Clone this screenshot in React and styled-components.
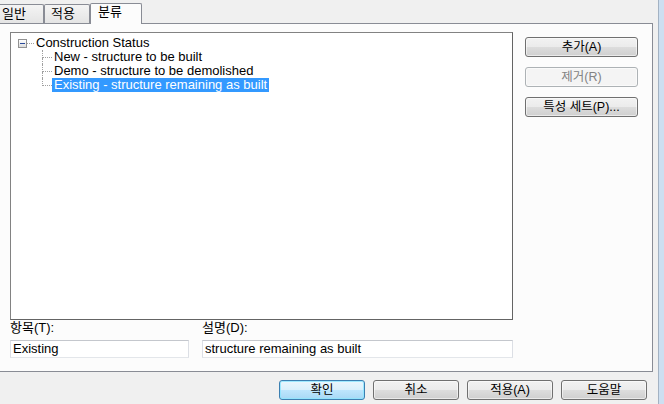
import styled, { createGlobalStyle } from "styled-components";

const GlobalStyle = createGlobalStyle`
  html, body {
    margin: 0;
    padding: 0;
    background: #f0f0f0;
  }
  body {
    font-family: "Liberation Sans", "Noto Sans CJK KR", sans-serif;
    font-size: 12.5px;
    color: #000;
    overflow: hidden;
  }
`;

const Screen = styled.div`
  display: flex;
  width: 664px;
  height: 404px;
  overflow: hidden;
  background: #f0f0f0;
`;

const Dialog = styled.div`
  flex: 1;
  min-width: 0;
  margin-left: -1px;
  display: flex;
  flex-direction: column;
`;

const WindowEdge = styled.div`
  width: 5px;
  border-left: 1px solid #a3b2c3;
  background: #cddff1;
`;

const TabStrip = styled.div`
  display: flex;
  align-items: flex-end;
  height: 23px;
  margin-left: -4px;
`;

const Tab = styled.div`
  position: relative;
  z-index: ${(p) => (p.$active ? 2 : 1)};
  box-sizing: border-box;
  width: ${(p) => p.$w}px;
  height: ${(p) => (p.$active ? 21 : 19)}px;
  margin-bottom: ${(p) => (p.$active ? -1 : 0)}px;
  padding: ${(p) => (p.$active ? "0 0 0 7px" : "1px 0 0 6px")};
  border: 1px solid #898c95;
  border-bottom: none;
  border-radius: 2px 2px 0 0;
  background: ${(p) =>
    p.$active ? "#fcfcfc" : "linear-gradient(#f4f4f4, #e4e4e4)"};
  font-size: 13px;
  line-height: 15px;
  white-space: nowrap;
`;

const Panel = styled.div`
  box-sizing: border-box;
  height: 349px;
  margin-right: 5px;
  padding: 8px 0 0 10px;
  border: 1px solid #898c95;
  background: #fcfcfc;
  display: flex;
  gap: 12px;
`;

const LeftColumn = styled.div`
  width: 503px;
  display: flex;
  flex-direction: column;
`;

const TreeBox = styled.div`
  box-sizing: border-box;
  height: 288px;
  padding: 3px 0 0 7px;
  border: 1px solid;
  border-color: #828282 #646464 #646464 #828282;
  background: #fff;
  font-size: 13px;
`;

const TreeRow = styled.div`
  display: flex;
  align-items: center;
  height: 14px;
  padding-left: ${(p) => p.$indent || 0}px;
`;

const Expander = styled.div`
  box-sizing: border-box;
  width: 9px;
  height: 9px;
  margin-top: 1px;
  border: 1px solid #929292;
  background: linear-gradient(#ffffff, #dcdcdc);
  display: flex;
  align-items: center;
  justify-content: center;

  &::after {
    content: "";
    width: 5px;
    height: 1px;
    background: #2a4a9b;
  }
`;

const RootStub = styled.div`
  width: 7px;
  height: 0;
  margin-top: 1px;
  border-top: 1px dotted #a0a0a0;
`;

const Connector = styled.div`
  width: 10px;
  height: 14px;
  display: flex;
  flex-direction: column;
`;

const ConnectorTop = styled.div`
  box-sizing: border-box;
  height: 8px;
  border-left: 1px dotted #a0a0a0;
  border-bottom: 1px dotted #a0a0a0;
`;

const ConnectorBottom = styled.div`
  height: 6px;
  border-left: 1px dotted ${(p) => (p.$last ? "transparent" : "#a0a0a0")};
`;

const NodeLabel = styled.span`
  padding: 0 2px;
  line-height: 14px;
  white-space: nowrap;
  background: ${(p) => (p.$selected ? "#3399ff" : "transparent")};
  color: ${(p) => (p.$selected ? "#fff" : "#000")};
`;

const FieldRow = styled.div`
  display: flex;
  gap: 13px;
`;

const Field = styled.div`
  width: ${(p) => p.$w}px;
  display: flex;
  flex-direction: column;
`;

const FieldLabel = styled.div`
  height: 14px;
  margin: 1px 0 5px;
  font-size: 13px;
  line-height: 14px;
`;

const TextBox = styled.div`
  box-sizing: border-box;
  height: 18px;
  padding: 0 2px;
  border: 1px solid;
  border-color: #c4c7cd #dcdfe5 #e3e6ea #dcdfe5;
  background: #fff;
  font-size: 13px;
  line-height: 16px;
  white-space: nowrap;
  overflow: hidden;
`;

const ButtonColumn = styled.div`
  padding-top: 5px;
  display: flex;
  flex-direction: column;
  gap: 10px;
`;

const Button = styled.button`
  box-sizing: border-box;
  width: ${(p) => p.$w}px;
  height: 20px;
  padding: 0;
  border: 1px solid
    ${(p) => (p.$focused ? "#3c7fb1" : p.disabled ? "#adb2b5" : "#707070")};
  border-radius: 3px;
  background: ${(p) =>
    p.$focused
      ? "linear-gradient(#eaf6fd 0%, #d9f0fc 50%, #bee6fd 50%, #a7d9f5 100%)"
      : p.disabled
      ? "#f4f4f4"
      : "linear-gradient(#f2f2f2 0%, #ebebeb 50%, #dddddd 50%, #cfcfcf 100%)"};
  box-shadow: inset 0 0 0 1px
    ${(p) => (p.$focused ? "rgba(140, 230, 255, 0.8)" : "rgba(255, 255, 255, 0.55)")};
  font: inherit;
  line-height: 18px;
  color: ${(p) => (p.disabled ? "#838383" : "#000")};
  text-align: center;
`;

const Footer = styled.div`
  display: flex;
  justify-content: flex-end;
  gap: 8px;
  padding: 8px 11px 0 0;
`;

const children = [
  "New - structure to be built",
  "Demo - structure to be demolished",
  "Existing - structure remaining as built",
];

const App = () => {
  const selected = 2;

  return (
    <Screen>
      <GlobalStyle />
      <Dialog>
        <TabStrip>
          <Tab $w={49}>일반</Tab>
          <Tab $w={46}>적용</Tab>
          <Tab $w={52} $active>
            분류
          </Tab>
        </TabStrip>

        <Panel>
          <LeftColumn>
            <TreeBox>
              <TreeRow>
                <Expander />
                <RootStub />
                <NodeLabel>Construction Status</NodeLabel>
              </TreeRow>
              {children.map((text, idx) => (
                <TreeRow key={text} $indent={24}>
                  <Connector>
                    <ConnectorTop />
                    <ConnectorBottom $last={idx === children.length - 1} />
                  </Connector>
                  <NodeLabel $selected={idx === selected}>{text}</NodeLabel>
                </TreeRow>
              ))}
            </TreeBox>

            <FieldRow>
              <Field $w={179}>
                <FieldLabel>항목(T):</FieldLabel>
                <TextBox>Existing</TextBox>
              </Field>
              <Field $w={311}>
                <FieldLabel>설명(D):</FieldLabel>
                <TextBox>structure remaining as built</TextBox>
              </Field>
            </FieldRow>
          </LeftColumn>

          <ButtonColumn>
            <Button $w={113}>추가(A)</Button>
            <Button $w={113} disabled>
              제거(R)
            </Button>
            <Button $w={113}>특성 세트(P)...</Button>
          </ButtonColumn>
        </Panel>

        <Footer>
          <Button $w={86} $focused>
            확인
          </Button>
          <Button $w={86}>취소</Button>
          <Button $w={86}>적용(A)</Button>
          <Button $w={86}>도움말</Button>
        </Footer>
      </Dialog>
      <WindowEdge />
    </Screen>
  );
};

export default App;
